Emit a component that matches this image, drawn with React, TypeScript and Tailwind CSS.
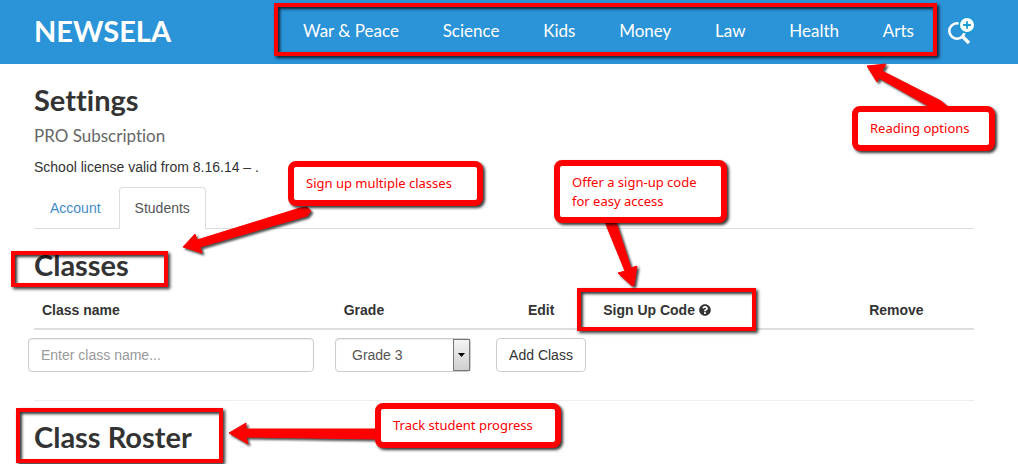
import type { ReactNode } from 'react';
import { FaQuestionCircle } from 'react-icons/fa';

const topics = ['War & Peace', 'Science', 'Kids', 'Money', 'Law', 'Health', 'Arts'];

const grades = ['Grade 3', 'Grade 4', 'Grade 5', 'Grade 6', 'Grade 7', 'Grade 8'];

const arrows = [
  // Reading options
  '867,66 886,64 882,71 941,101 948,107 930,107 879,78 877,82',
  // Sign up multiple classes
  '183,247 195,234 197,240 300,208 307,207 311,211 307,216 200,247 202,253',
  // Offer a sign-up code
  '605,222 616,222 631,268 637,266 634,285 632,286 618,273 625,271',
  // Track student progress
  '229,433 246,423 246,429 378,429 378,439 246,437 248,444',
];

function Frame({ className }: { className: string }) {
  return (
    <div className={`absolute pointer-events-none ${className}`}>
      <div className="h-full border-4 border-[#fe0000] shadow-[2px_2px_3px_rgba(0,0,0,0.8),inset_2px_2px_3px_rgba(0,0,0,0.8)]" />
    </div>
  );
}

function Callout({ className, children }: { className: string; children: ReactNode }) {
  return (
    <div
      className={`absolute rounded-lg border-6 border-[#fe0000] bg-white pl-3 font-['Noto_Sans',sans-serif] text-[13px] leading-[19px] text-[#fe0000] shadow-[2px_2px_3px_rgba(0,0,0,0.8)] flex items-center ${className}`}
    >
      {children}
    </div>
  );
}

function SearchIcon() {
  return (
    <svg viewBox="0 0 26 28" className="w-[26px] h-7" fill="none">
      <circle cx="9" cy="14" r="7.7" stroke="white" strokeWidth="2.6" />
      <path d="M14 19L21 26" stroke="white" strokeWidth="3.4" />
      <circle cx="19" cy="8" r="8.6" fill="#159bd5" />
      <circle cx="19" cy="8" r="7" fill="white" />
      <path d="M19 4.2v7.6M15.2 8h7.6" stroke="#159bd5" strokeWidth="1.8" />
    </svg>
  );
}

export default function App() {
  return (
    <div className="relative overflow-hidden bg-white pb-3 font-['Liberation_Sans',Arial,sans-serif] text-sm text-[#333] [font-variant-ligatures:none]">
      {/* Header */}
      <header className="flex h-16 items-center bg-[#2b93d7] pb-0.5 pl-[34px] pr-11 font-['Lato',sans-serif] text-white">
        <a href="#" className="w-[269px] shrink-0 text-[29px] font-bold">
          NEWSELA
        </a>
        <nav className="mr-[34px] flex flex-1 justify-between text-[17px]">
          {topics.map((topic) => (
            <a key={topic} href="#" className="whitespace-nowrap">
              {topic}
            </a>
          ))}
        </nav>
        <button type="button" aria-label="Search">
          <SearchIcon />
        </button>
      </header>

      <main className="pl-[34px] pr-11 pt-5">
        <h1 className="font-['Lato',sans-serif] text-[29px] font-bold leading-8">Settings</h1>
        <p className="mt-2.5 font-['Lato',sans-serif] text-[17px] leading-5 text-[#666]">PRO Subscription</p>
        <p className="mt-[11px] leading-5">School license valid from 8.16.14 – .</p>

        {/* Tabs */}
        <div className="mt-2.5 flex border-b border-[#ddd]">
          <a href="#" className="px-4 pb-2.5 pt-[11px] leading-5 text-[#428bca]">
            Account
          </a>
          <a
            href="#"
            className="-mb-px ml-0.5 rounded-t border border-b-0 border-[#ddd] bg-white px-[15px] py-2.5 leading-5 text-[#555]"
          >
            Students
          </a>
        </div>

        {/* Classes */}
        <h2 className="mt-5 font-['Lato',sans-serif] text-[29px] font-bold leading-8">Classes</h2>
        <table className="mt-[11px] w-full table-fixed border-b-2 border-[#ddd] text-left">
          <thead>
            <tr className="leading-5">
              <th className="w-[32.1%] p-2">Class name</th>
              <th className="w-[19.6%] p-2">Grade</th>
              <th className="w-[8%] p-2">Edit</th>
              <th className="w-[28.3%] p-2">
                <span className="flex items-center gap-1">
                  Sign Up Code <FaQuestionCircle className="size-3" />
                </span>
              </th>
              <th className="w-[12%] p-2">Remove</th>
            </tr>
          </thead>
        </table>
        <form className="-ml-1.5 mt-2 flex">
          <input
            type="text"
            aria-label="Class name"
            placeholder="Enter class name..."
            className="h-[34px] w-[286px] rounded border border-[#ccc] px-3 shadow-[inset_0_1px_1px_rgba(0,0,0,0.08)] placeholder:text-[#999]"
          />
          <div className="relative ml-[21px] w-[136px]">
            <select
              aria-label="Grade"
              className="h-[34px] w-full appearance-none rounded border border-[#ccc] bg-white px-4 text-[#555] shadow-[inset_0_1px_1px_rgba(0,0,0,0.08)]"
            >
              {grades.map((grade) => (
                <option key={grade}>{grade}</option>
              ))}
            </select>
            <span className="pointer-events-none absolute inset-y-px right-px flex w-[17px] items-center justify-center border border-[#777] bg-linear-to-b from-[#f4f4f4] to-[#cfcfcf]">
              <svg viewBox="0 0 7 4" className="h-1 w-[7px]">
                <path d="M0 0h7L3.5 4z" fill="black" />
              </svg>
            </span>
          </div>
          <button type="button" className="ml-[25px] h-[34px] w-[90px] rounded border border-[#ccc] bg-white">
            Add Class
          </button>
        </form>

        <hr className="mt-7 border-[#eee]" />

        {/* Class Roster */}
        <h2 className="mt-5 font-['Lato',sans-serif] text-[29px] font-bold leading-8">Class Roster</h2>
      </main>

      {/* Annotations */}
      <Frame className="left-[274px] top-[3px] w-[663px] h-[53px]" />
      <Frame className="left-[11px] top-[251px] w-[157px] h-9" />
      <Frame className="left-[577px] top-[288px] w-[179px] h-[43px]" />
      <Frame className="left-4 top-[408px] w-[207px] h-[55px]" />
      <svg
        viewBox="0 0 1018 464"
        className="pointer-events-none absolute left-0 top-0 h-[464px] w-[1018px] drop-shadow-[2px_2px_1px_rgba(0,0,0,0.7)]"
      >
        {arrows.map((points) => (
          <polygon key={points} points={points} fill="#fe0000" stroke="#fe0000" strokeLinejoin="round" />
        ))}
      </svg>
      <Callout className="left-[852px] top-[106px] w-[143px] h-[45px]">Reading options</Callout>
      <Callout className="left-[288px] top-[161px] w-[195px] h-[45px]">Sign up multiple classes</Callout>
      <Callout className="left-[554px] top-[160px] w-[173px] h-[63px]">
        Offer a sign-up code
        <br />
        for easy access
      </Callout>
      <Callout className="left-[375px] top-[403px] w-[186px] h-[45px]">Track student progress</Callout>
    </div>
  );
}
